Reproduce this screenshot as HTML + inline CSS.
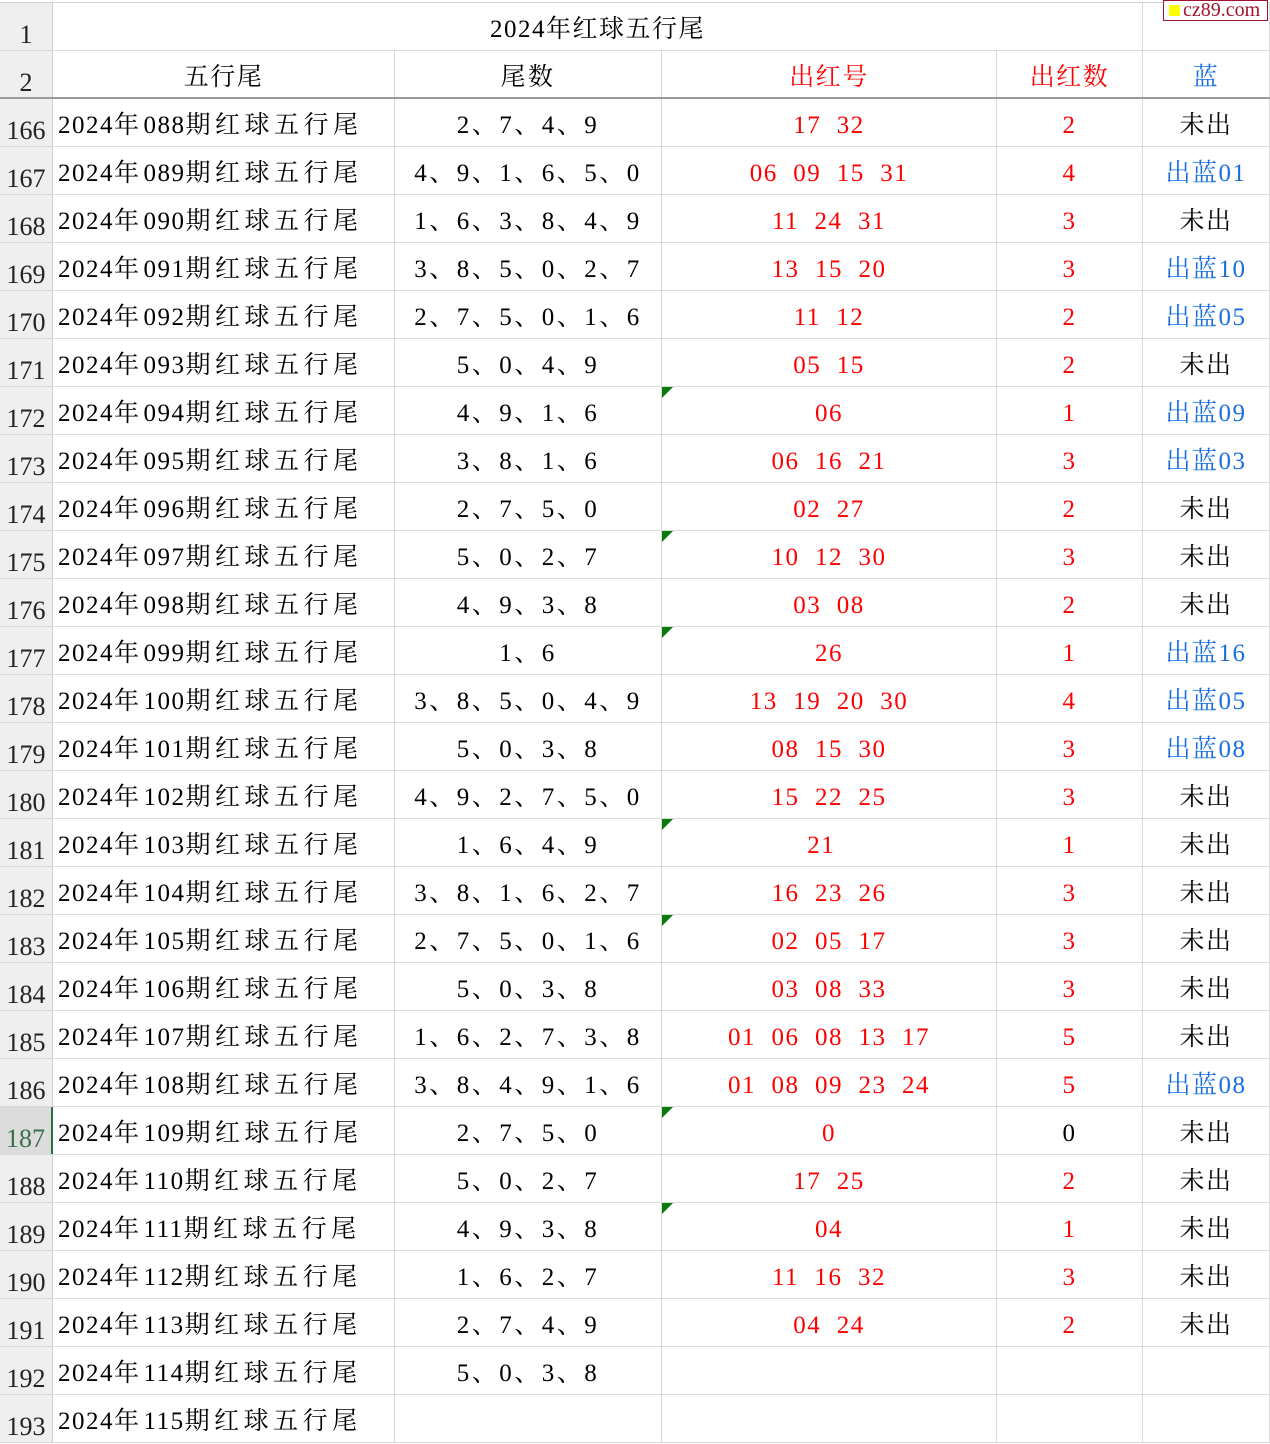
<!DOCTYPE html>
<html><head><meta charset="utf-8"><style>
body{margin:0;background:#fff;width:1270px;height:1444px;overflow:hidden;font-family:"Liberation Serif","Noto Serif CJK SC",serif;}
.g{position:absolute;left:0;top:2px;width:1270px;border-top:1px solid #d0d0d0}
.row{display:flex;height:48px;box-sizing:border-box;border-bottom:1px solid #d9d9d9}
.row>div{box-sizing:border-box;border-right:1px solid #d9d9d9;font-size:25px;text-align:center;white-space:pre;overflow:hidden;letter-spacing:1.5px;color:#000;position:relative;line-height:47px;padding-top:3px}
.row>div:nth-child(1){width:53px;background:#efefef;color:#222;font-size:26px;letter-spacing:0;line-height:26px;padding-top:19px;border-right-color:#cfcfcf}
.row>div:nth-child(2){width:342px}
.row>div:nth-child(3){width:267px;letter-spacing:2.5px}
.row>div:nth-child(4){width:335px}
.row>div:nth-child(5){width:146px}
.row>div:nth-child(6){width:127px}
.row>div.a{text-align:left;padding-left:5px}
.a .c{letter-spacing:4.5px}
.r{color:#f00 !important}.b{color:#1a6fe0 !important}
.row.hd{border-bottom:2px solid #9a9a9a}
.tri{position:absolute;left:0;top:0;width:0;height:0;border-top:11px solid #0a7a0a;border-right:11px solid transparent}
.wm{position:absolute;left:1163px;top:0;width:103px;height:19px;border:1px solid #a0132a;background:#fff;color:#a0132a;font-size:20px;line-height:19px;z-index:5;white-space:nowrap;overflow:hidden}
.wm i{display:inline-block;width:11px;height:11px;background:#ffff00;margin:0 3px 0 5px;vertical-align:0}
.row>div.sel{color:#3a6f4a;border-right:2px solid #217346;background:#dcdcdc}
</style></head><body>
<div class="wm"><i></i>cz89.com</div>
<div class="g">
<div class="row"><div>1</div><div style="width:1090px">2024年红球五行尾</div><div style="width:127px"></div></div>
<div class="row hd"><div>2</div><div>五行尾</div><div>尾数</div><div class="r">出红号</div><div class="r">出红数</div><div class="b">蓝</div></div>
<div class="row"><div>166</div><div class="a">2024<span class="c">年</span>088<span class="c">期红球五行尾</span></div><div>2、7、4、9</div><div class="r">17  32</div><div class="r">2</div><div>未出</div></div>
<div class="row"><div>167</div><div class="a">2024<span class="c">年</span>089<span class="c">期红球五行尾</span></div><div>4、9、1、6、5、0</div><div class="r">06  09  15  31</div><div class="r">4</div><div class="b">出蓝01</div></div>
<div class="row"><div>168</div><div class="a">2024<span class="c">年</span>090<span class="c">期红球五行尾</span></div><div>1、6、3、8、4、9</div><div class="r">11  24  31</div><div class="r">3</div><div>未出</div></div>
<div class="row"><div>169</div><div class="a">2024<span class="c">年</span>091<span class="c">期红球五行尾</span></div><div>3、8、5、0、2、7</div><div class="r">13  15  20</div><div class="r">3</div><div class="b">出蓝10</div></div>
<div class="row"><div>170</div><div class="a">2024<span class="c">年</span>092<span class="c">期红球五行尾</span></div><div>2、7、5、0、1、6</div><div class="r">11  12</div><div class="r">2</div><div class="b">出蓝05</div></div>
<div class="row"><div>171</div><div class="a">2024<span class="c">年</span>093<span class="c">期红球五行尾</span></div><div>5、0、4、9</div><div class="r">05  15</div><div class="r">2</div><div>未出</div></div>
<div class="row"><div>172</div><div class="a">2024<span class="c">年</span>094<span class="c">期红球五行尾</span></div><div>4、9、1、6</div><div class="r"><span class="tri"></span>06</div><div class="r">1</div><div class="b">出蓝09</div></div>
<div class="row"><div>173</div><div class="a">2024<span class="c">年</span>095<span class="c">期红球五行尾</span></div><div>3、8、1、6</div><div class="r">06  16  21</div><div class="r">3</div><div class="b">出蓝03</div></div>
<div class="row"><div>174</div><div class="a">2024<span class="c">年</span>096<span class="c">期红球五行尾</span></div><div>2、7、5、0</div><div class="r">02  27</div><div class="r">2</div><div>未出</div></div>
<div class="row"><div>175</div><div class="a">2024<span class="c">年</span>097<span class="c">期红球五行尾</span></div><div>5、0、2、7</div><div class="r"><span class="tri"></span>10  12  30</div><div class="r">3</div><div>未出</div></div>
<div class="row"><div>176</div><div class="a">2024<span class="c">年</span>098<span class="c">期红球五行尾</span></div><div>4、9、3、8</div><div class="r">03  08</div><div class="r">2</div><div>未出</div></div>
<div class="row"><div>177</div><div class="a">2024<span class="c">年</span>099<span class="c">期红球五行尾</span></div><div>1、6</div><div class="r"><span class="tri"></span>26</div><div class="r">1</div><div class="b">出蓝16</div></div>
<div class="row"><div>178</div><div class="a">2024<span class="c">年</span>100<span class="c">期红球五行尾</span></div><div>3、8、5、0、4、9</div><div class="r">13  19  20  30</div><div class="r">4</div><div class="b">出蓝05</div></div>
<div class="row"><div>179</div><div class="a">2024<span class="c">年</span>101<span class="c">期红球五行尾</span></div><div>5、0、3、8</div><div class="r">08  15  30</div><div class="r">3</div><div class="b">出蓝08</div></div>
<div class="row"><div>180</div><div class="a">2024<span class="c">年</span>102<span class="c">期红球五行尾</span></div><div>4、9、2、7、5、0</div><div class="r">15  22  25</div><div class="r">3</div><div>未出</div></div>
<div class="row"><div>181</div><div class="a">2024<span class="c">年</span>103<span class="c">期红球五行尾</span></div><div>1、6、4、9</div><div class="r"><span class="tri"></span>21  </div><div class="r">1</div><div>未出</div></div>
<div class="row"><div>182</div><div class="a">2024<span class="c">年</span>104<span class="c">期红球五行尾</span></div><div>3、8、1、6、2、7</div><div class="r">16  23  26</div><div class="r">3</div><div>未出</div></div>
<div class="row"><div>183</div><div class="a">2024<span class="c">年</span>105<span class="c">期红球五行尾</span></div><div>2、7、5、0、1、6</div><div class="r"><span class="tri"></span>02  05  17</div><div class="r">3</div><div>未出</div></div>
<div class="row"><div>184</div><div class="a">2024<span class="c">年</span>106<span class="c">期红球五行尾</span></div><div>5、0、3、8</div><div class="r">03  08  33</div><div class="r">3</div><div>未出</div></div>
<div class="row"><div>185</div><div class="a">2024<span class="c">年</span>107<span class="c">期红球五行尾</span></div><div>1、6、2、7、3、8</div><div class="r">01  06  08  13  17</div><div class="r">5</div><div>未出</div></div>
<div class="row"><div>186</div><div class="a">2024<span class="c">年</span>108<span class="c">期红球五行尾</span></div><div>3、8、4、9、1、6</div><div class="r">01  08  09  23  24</div><div class="r">5</div><div class="b">出蓝08</div></div>
<div class="row"><div class="sel">187</div><div class="a">2024<span class="c">年</span>109<span class="c">期红球五行尾</span></div><div>2、7、5、0</div><div class="r"><span class="tri"></span>0</div><div>0</div><div>未出</div></div>
<div class="row"><div>188</div><div class="a">2024<span class="c">年</span>110<span class="c">期红球五行尾</span></div><div>5、0、2、7</div><div class="r">17  25</div><div class="r">2</div><div>未出</div></div>
<div class="row"><div>189</div><div class="a">2024<span class="c">年</span>111<span class="c">期红球五行尾</span></div><div>4、9、3、8</div><div class="r"><span class="tri"></span>04</div><div class="r">1</div><div>未出</div></div>
<div class="row"><div>190</div><div class="a">2024<span class="c">年</span>112<span class="c">期红球五行尾</span></div><div>1、6、2、7</div><div class="r">11  16  32</div><div class="r">3</div><div>未出</div></div>
<div class="row"><div>191</div><div class="a">2024<span class="c">年</span>113<span class="c">期红球五行尾</span></div><div>2、7、4、9</div><div class="r">04  24</div><div class="r">2</div><div>未出</div></div>
<div class="row"><div>192</div><div class="a">2024<span class="c">年</span>114<span class="c">期红球五行尾</span></div><div>5、0、3、8</div><div></div><div></div><div></div></div>
<div class="row"><div>193</div><div class="a">2024<span class="c">年</span>115<span class="c">期红球五行尾</span></div><div></div><div></div><div></div><div></div></div>
</div>
</body></html>
